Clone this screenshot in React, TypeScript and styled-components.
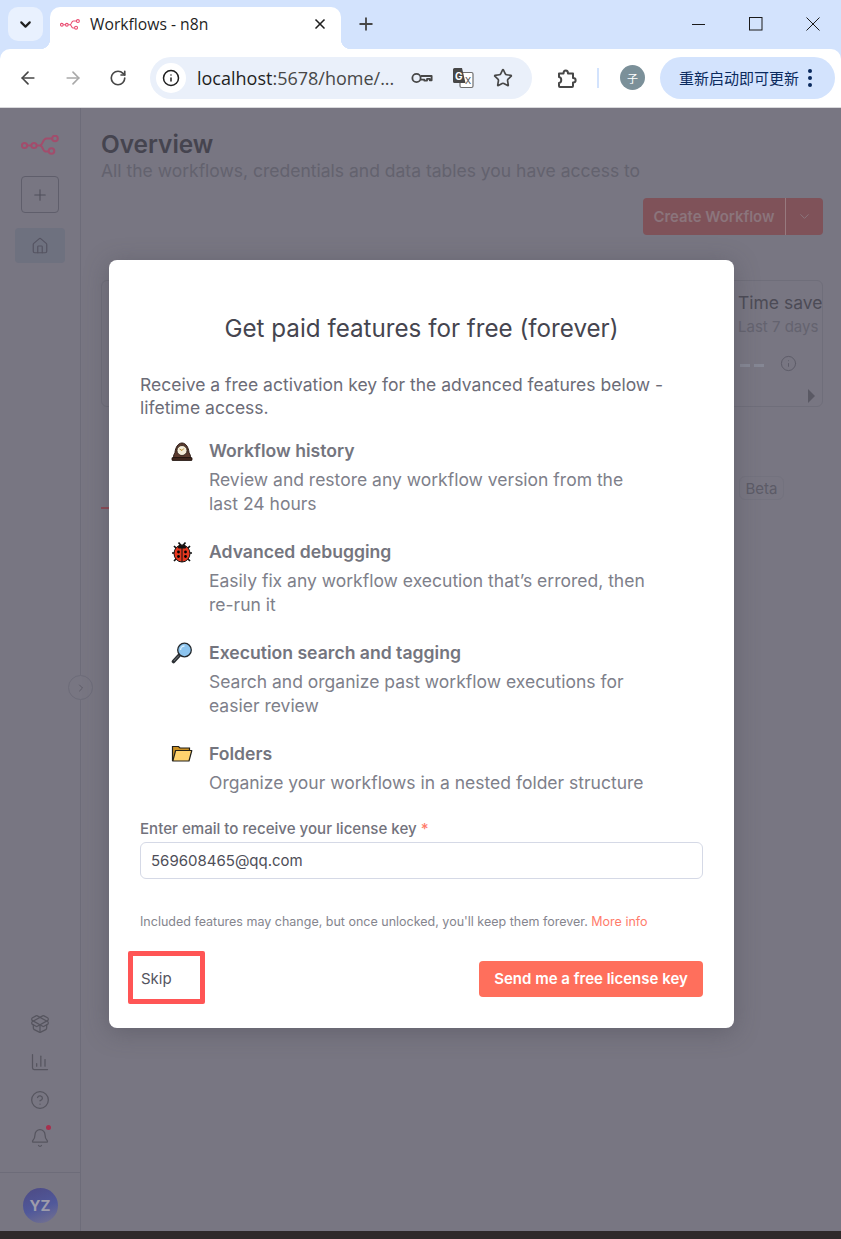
import React from "react";
import styled, { createGlobalStyle } from "styled-components";
import { ArrowLeft, ArrowRight, RotateCw, Info, Star, Plus, X, ChevronDown, ChevronRight, Home, PackageOpen, ChartColumn, CircleHelp, Bell } from "lucide-react";

const Global = createGlobalStyle`
  html, body { margin: 0; padding: 0; background: #787682; }
  * { box-sizing: border-box; }
  body { font-family: Inter, "Liberation Sans", sans-serif; }
`;

const Page = styled.div`
  width: 841px; height: 1239px; display: flex; flex-direction: column; overflow: hidden; background: #d3e3fd;
`;
const TabStrip = styled.div`
  height: 49px; flex: none; display: flex; align-items: flex-start; padding: 7px 0 0 8px; background: #d3e3fd;
`;
const TabMenu = styled.div`
  width: 35px; height: 34px; border-radius: 10px; background: #e9f1fe; color: #1f1f1f; display: flex; align-items: center; justify-content: center; flex: none;
`;
const Tab = styled.div`
  position: relative; width: 291px; height: 42px; margin-left: 7px; background: #fff; border-radius: 10px 10px 0 0; display: flex; align-items: center; padding: 0 13px 8px 10px; gap: 10px; color: #1f1f1f;
  font: 400 15.7px "Open Sans", "Liberation Sans", sans-serif; flex: none;
  &::before, &::after { content: ""; position: absolute; bottom: 0; width: 10px; height: 10px; }
  &::before { left: -10px; background: radial-gradient(circle at 0 0, transparent 10px, #fff 10.5px); }
  &::after { right: -10px; background: radial-gradient(circle at 100% 0, transparent 10px, #fff 10.5px); }
`;
const TabTitle = styled.span`flex: 1;`;
const NewTab = styled.div`
  margin: 7px 0 0 15px; color: #474747; display: flex; flex: none;
`;
const WindowControls = styled.div`
  margin-left: auto; display: flex; align-items: center; height: 34px; padding-right: 21px; gap: 43px; color: #1a1a1a;
`;
const Toolbar = styled.div`
  height: 59px; flex: none; display: flex; align-items: center; background: #fff; border-radius: 10px 10px 0 0; padding: 0 6px 1px 18px; border-bottom: 1px solid #d9d9dc; position: relative;
`;
const NavButton = styled.div<{ $dim?: boolean }>`
  width: 20px; display: flex; justify-content: center; color: ${(p) => (p.$dim ? "#a9a9a9" : "#474747")}; margin-right: 25px; flex: none;
`;
const Omnibox = styled.div`
  width: 382px; height: 42px; border-radius: 21px; background: #eaf0fa; margin-left: -3px; display: flex; align-items: center; padding: 0 18px 0 6px; flex: none;
`;
const InfoChip = styled.div`
  width: 30px; height: 30px; border-radius: 50%; background: #fff; display: flex; align-items: center; justify-content: center; color: #1f1f1f; flex: none;
`;
const Url = styled.span`
  margin-left: 11px; font: 400 18px "Open Sans", "Liberation Sans", sans-serif; color: #1f1f1f; width: 214px; white-space: nowrap; flex: none;
`;
const Muted = styled.span`color: #474747;`;
const OmniIcons = styled.div`display: flex; align-items: center; gap: 19px; color: #474747;`;
const ExtIcon = styled.div`margin-left: 24px; display: flex; color: #474747; flex: none;`;
const Separator = styled.div`width: 2px; height: 20px; background: #d3e3fd; margin-left: 19px; flex: none;`;
const Profile = styled.div`
  width: 25px; height: 25px; border-radius: 50%; background: #7b9099; color: #fff; font: 400 11px "Noto Sans CJK SC", sans-serif; display: flex; align-items: center; justify-content: center; margin-left: 21px; flex: none;
`;
const UpdatePill = styled.div`
  width: 175px; height: 42px; border-radius: 21px; background: #d3e3fd; color: #0a2a5e; margin-left: 15px; display: flex; align-items: center; padding-left: 19px;
  font: 400 15px "Noto Sans CJK SC", sans-serif; flex: none; white-space: nowrap;
`;
const Kebab = styled.div`
  margin-left: 9px; display: flex; flex-direction: column; gap: 3px;
  i { width: 4px; height: 4px; border-radius: 50%; background: #0a2a5e; display: block; }
`;

const AppArea = styled.div`
  position: relative; height: 1123px; flex: none; display: flex; background: #787682; overflow: hidden;
`;
const Sidebar = styled.aside`
  width: 81px; flex: none; border-right: 1px solid #6d6c79; display: flex; flex-direction: column; align-items: center; padding-top: 27px; position: relative; color: #5b5a66;
`;
const LogoBox = styled.div`height: 20px; display: flex;`;
const AddButton = styled.div`
  width: 38px; height: 37px; margin-top: 21px; border: 1px solid #5f5e6b; border-radius: 4px; display: flex; align-items: center; justify-content: center; color: #4f4e5a;
`;
const HomeButton = styled.div`
  width: 50px; height: 35px; margin-top: 15px; border-radius: 4px; background: #6e717f; display: flex; align-items: center; justify-content: center; color: #555462;
`;
const SideIcons = styled.div`
  margin-top: auto; display: flex; flex-direction: column; align-items: center; gap: 18px; color: #56555f; padding-bottom: 24px;
`;
const BellWrap = styled.div`
  position: relative; display: flex;
  &::after { content: ""; position: absolute; right: -1px; top: -3px; width: 5px; height: 5px; border-radius: 50%; background: #a8304d; }
`;
const SideFooter = styled.div`
  width: 80px; height: 59px; border-top: 1px solid #6d6c79; display: flex; justify-content: center; padding-top: 15px; flex: none;
`;
const Avatar = styled.div`
  width: 35px; height: 35px; border-radius: 50%; background: linear-gradient(160deg, #4d4a84 0%, #50589a 55%, #77748f 100%); color: #9d9cab; font: 700 15px Inter, sans-serif; display: flex; align-items: center; justify-content: center;
`;
const Collapse = styled.div`
  position: absolute; top: 567px; right: -13px; width: 25px; height: 25px; border-radius: 50%; border: 1px solid #6d6c79; background: #787682; display: flex; align-items: center; justify-content: center; color: #55545f;
`;
const BottomBar = styled.div`height: 8px; flex: none; background: #2f2a2b;`;

const Main = styled.main`
  flex: 1; min-width: 0; padding: 22px 18px 0 20px; display: flex; flex-direction: column;
`;
const Heading = styled.h1`margin: 0; font: 600 24.4px/28px Inter, sans-serif; color: #45444f;`;
const Sub = styled.p`margin: 1px 0 0; font: 400 17.5px/24px Inter, sans-serif; color: #63626e; white-space: nowrap;`;
const Actions = styled.div`display: flex; justify-content: flex-end; margin-top: 15px;`;
const CreateSplit = styled.div`
  width: 180px; height: 37px; background: #7f5259; border-radius: 4px; display: flex; color: #8b757c; font: 600 14.9px Inter, sans-serif;
`;
const CreateLabel = styled.div`flex: 1; display: flex; align-items: center; justify-content: center; border-right: 1px solid #977a7f;`;
const CreateCaret = styled.div`width: 37px; display: flex; align-items: center; justify-content: center;`;
const InsightCard = styled.div`
  position: relative; margin-top: 45px; height: 127px; border: 1px solid #6f6e7a; border-radius: 6px; display: flex; justify-content: flex-end; overflow: hidden;
`;
const Insight = styled.div`width: 84px; flex: none; padding-top: 11px; white-space: nowrap; overflow: hidden;`;
const InsightTitle = styled.div`font: 400 17.5px/22px Inter, sans-serif; color: #4c4b56;`;
const InsightRange = styled.div`font: 400 15px/20px Inter, sans-serif; color: #64636f; margin-top: 3px;`;
const InsightValue = styled.div`display: flex; align-items: center; gap: 16px; margin-top: 17px; color: #5d5c68; height: 18px;`;
const Dashes = styled.span`display: block; width: 24px; height: 3px; margin: 4px 0 0 2px; background: repeating-linear-gradient(90deg, #858794 0 10px, transparent 10px 14px);`;
const ScrollArrow = styled.div`
  position: absolute; right: 7px; bottom: 3px; width: 0; height: 0; border-left: 7px solid #5a5964; border-top: 7px solid transparent; border-bottom: 7px solid transparent;
`;
const TabRow = styled.div`
  margin-top: 69px; height: 35px; display: flex; align-items: flex-start; justify-content: space-between;
`;
const ActiveTab = styled.div`
  width: 70px; height: 33px; border-bottom: 2px solid #8d4a55;
`;
const Beta = styled.div`
  margin-right: 39px; width: 45px; height: 24px; border: 1px solid #73727e; border-radius: 6px; display: flex; align-items: center; justify-content: center; font: 400 15px Inter, sans-serif; color: #5c5b67;
`;

const Overlay = styled.div`position: absolute; inset: 0; padding: 152px 0 0 109px;`;
const Modal = styled.section`
  width: 625px; height: 768px; background: #fff; border-radius: 8px; padding: 0 31px; display: flex; flex-direction: column; box-shadow: 0 4px 24px rgba(60, 60, 70, .35);
`;
const ModalTitle = styled.h2`
  margin: 53px 0 0; font: 400 24.2px/32px Inter, sans-serif; color: #45454f; text-align: center;
`;
const Lead = styled.p`
  margin: 28px 0 0; font: 400 17.5px/23px Inter, sans-serif; color: #6c6c77;
`;
const FeatureList = styled.ul`margin: 20px 0 0; padding: 0 0 0 31px; list-style: none; display: flex; flex-direction: column; gap: 25px;`;
const Feature = styled.li`display: grid; grid-template-columns: 38px 1fr; `;
const FeatureIcon = styled.div`padding-top: 1px; display: flex;`;
const FeatureTitle = styled.div`font: 600 17.6px/23px Inter, sans-serif; color: #74757e;`;
const FeatureText = styled.div`margin-top: 6px; width: 440px; font: 400 17.5px/23.5px Inter, sans-serif; color: #7e808a;`;
const FieldLabel = styled.label`display: block; margin-top: 24px; font: 500 15.1px/20px Inter, sans-serif; color: #72727c;`;
const Required = styled.span`color: #ff7c6b;`;
const EmailInput = styled.input`
  display: block; width: 563px; height: 37px; margin-top: 3px; padding: 0 10px; border: 1px solid #d5d9e6; border-radius: 6px; font: 400 15px Inter, sans-serif; color: #4e4e58; outline: none; background: #fff;
`;
const Note = styled.p`margin: 34px 0 0; font: 400 12.5px/18px Inter, sans-serif; color: #85858e;`;
const MoreInfo = styled.a`color: #ff7c6b;`;
const ModalFooter = styled.div`display: flex; align-items: flex-start; justify-content: space-between; margin-top: 20px;`;
const SkipButton = styled.button`
  width: 77px; height: 53px; margin-left: -12px; padding: 2px 0 0 8px; text-align: left; border: 5px solid #ff5555; border-radius: 2px; background: #fff; font: 400 15px Inter, sans-serif; color: #55555f;
`;
const SendButton = styled.button`
  width: 224px; height: 36px; margin-top: 10px; border: 0; border-radius: 4px; background: #ff6f5c; color: #fff; font: 600 15px Inter, sans-serif;
`;

const N8nLogo = ({ w, h, c }: { w: number; h: number; c: string }) => (
  <svg width={w} height={h} viewBox="0 0 38 20" fill="none" stroke={c} strokeWidth="2">
    <circle cx="3.5" cy="10.5" r="2.6" />
    <circle cx="13" cy="10.5" r="2.6" />
    <path d="M6 10.5h4.500M15.600 10.500h3.400c3 0 2.400-7 6.500-7h6" />
    <path d="M19 10.500c3 0 2.400 6 5.500 6h3.500" />
    <circle cx="34" cy="3.5" r="2.8" />
    <circle cx="30.5" cy="16" r="2.8" />
  </svg>
);

const ClockEmoji = () => (
  <svg width="22" height="22" viewBox="0 0 22 22">
    <path d="M2.500 18c0-3 .5-3.500 1.500-5.500.5-5 3-9.500 7-9.500s6.500 4.500 7 9.500c1 2 1.500 2.500 1.500 5.500z" fill="#5b3a2e" stroke="#2a1a14" strokeWidth="1" />
    <rect x="1" y="17.500" width="20" height="3" rx=".6" fill="#3e261d" stroke="#20130e" strokeWidth=".8" />
    <circle cx="11" cy="10.500" r="5" fill="#f4ecd8" stroke="#2a1a14" strokeWidth=".8" />
    <path d="M11 10.500 8.500 9M11 10.500l1.800-2" stroke="#b98a2e" strokeWidth="1" />
  </svg>
);
const BugEmoji = () => (
  <svg width="22" height="22" viewBox="0 0 22 22">
    <path d="M3 5l3 3M19 5l-3 3M1 12h4M21 12h-4M3 20l3-3M19 20l-3-3M7.500 1.500l2.500 3M14.500 1.500l-2.500 3" stroke="#111" strokeWidth="1.700" />
    <ellipse cx="11" cy="12.500" rx="8" ry="8.500" fill="#e8381f" stroke="#111" strokeWidth="1" />
    <path d="M6.500 6c1.500-2.500 7.500-2.500 9 0l-1 1.500h-7z" fill="#111" />
    <path d="M11 6v15" stroke="#111" strokeWidth="1" />
    <circle cx="7.500" cy="11" r="1.400" /><circle cx="14.500" cy="11" r="1.400" /><circle cx="7.500" cy="15.500" r="1.400" /><circle cx="14.500" cy="15.500" r="1.400" />
  </svg>
);
const LensEmoji = () => (
  <svg width="22" height="22" viewBox="0 0 22 22">
    <path d="M2.500 19.500 8.500 13" stroke="#2b2f33" strokeWidth="3.600" strokeLinecap="round" />
    <path d="M2.800 19 8 13.500" stroke="#8a9298" strokeWidth=".8" />
    <circle cx="13.500" cy="8" r="6.800" fill="#8cc4ee" stroke="#23282c" strokeWidth="1.300" />
    <path d="M9.500 8a4 4 0 0 1 4-4" fill="none" stroke="#d9effc" strokeWidth="1.300" />
  </svg>
);
const FolderEmoji = () => (
  <svg width="22" height="22" viewBox="0 0 22 22">
    <path d="M1.500 18V3.500h6l1.500 1.500h9.500v3" fill="#c98f22" stroke="#22201a" strokeWidth="1.200" />
    <path d="M1.800 18 4.600 7.500h16.200L18 18z" fill="#ffd36e" stroke="#22201a" strokeWidth="1.200" strokeLinejoin="round" />
  </svg>
);
const KeyIcon = () => (
  <svg width="22" height="14" viewBox="0 0 24 14" fill="none" stroke="currentColor" strokeWidth="2">
    <circle cx="6" cy="7" r="4.500" />
    <path d="M10.500 4.800H22.500V9.500H20.500V8H17.500V9.800H14.500V8.800H10.500" strokeLinejoin="round" />
  </svg>
);
const TranslateIcon = () => (
  <svg width="22" height="22" viewBox="0 0 22 22">
    <rect x="8" y="5.500" width="13" height="15" rx="1.500" fill="#fff" stroke="#6f6f6f" strokeWidth="1.200" />
    <path d="M1 2.500A1.500 1.500 0 0 1 2.500 1H10l3.500 15H2.500A1.500 1.500 0 0 1 1 14.500z" fill="#474747" />
    <text x="3" y="12.500" fontFamily="Inter, sans-serif" fontWeight="700" fontSize="10" fill="#fff">G</text>
    <text x="13" y="17" fontFamily="Inter, sans-serif" fontSize="9" fill="#474747">X</text>
  </svg>
);
const PuzzleIcon = () => (
  <svg width="22" height="22" viewBox="0 0 22 22" fill="none" stroke="currentColor" strokeWidth="2" strokeLinejoin="round">
    <path d="M3 6.500h4.500c0-4 4.500-4 4.500 0H17v4.500c3.500 0 3.500 4.500 0 4.500v3.500a1 1 0 0 1-1 1H4a1 1 0 0 1-1-1v-3c3-.5 3-5.500 0-6z" />
  </svg>
);

const features = [
  { icon: <ClockEmoji />, title: "Workflow history", text: "Review and restore any workflow version from the last 24 hours" },
  { icon: <BugEmoji />, title: "Advanced debugging", text: "Easily fix any workflow execution that’s errored, then re-run it" },
  { icon: <LensEmoji />, title: "Execution search and tagging", text: "Search and organize past workflow executions for easier review" },
  { icon: <FolderEmoji />, title: "Folders", text: "Organize your workflows in a nested folder structure" },
];

export default function App() {
  return (
    <Page>
      <Global />
      <TabStrip>
        <TabMenu><ChevronDown size={17} strokeWidth={3} /></TabMenu>
        <Tab>
          <N8nLogo w={20} h={11} c="#ea4b71" />
          <TabTitle>Workflows - n8n</TabTitle>
          <X size={16} strokeWidth={2.5} />
        </Tab>
        <NewTab><Plus size={20} strokeWidth={2.2} /></NewTab>
        <WindowControls>
          <svg width="14" height="14" viewBox="0 0 14 14"><path d="M0 7.500h13" stroke="currentColor" /></svg>
          <svg width="14" height="14" viewBox="0 0 14 14" fill="none"><rect x=".5" y=".5" width="12.500" height="12.500" stroke="currentColor" /></svg>
          <svg width="14" height="14" viewBox="0 0 14 14"><path d="M.5.500l13 13M13.500.500l-13 13" stroke="currentColor" /></svg>
        </WindowControls>
      </TabStrip>
      <Toolbar>
        <NavButton><ArrowLeft size={20} strokeWidth={2} /></NavButton>
        <NavButton $dim><ArrowRight size={20} strokeWidth={2} /></NavButton>
        <NavButton><RotateCw size={18} strokeWidth={2.2} /></NavButton>
        <Omnibox>
          <InfoChip><Info size={18} strokeWidth={2} /></InfoChip>
          <Url>localhost<Muted>:5678/home/...</Muted></Url>
          <OmniIcons>
            <KeyIcon />
            <TranslateIcon />
            <Star size={20} strokeWidth={2} />
          </OmniIcons>
        </Omnibox>
        <ExtIcon><PuzzleIcon /></ExtIcon>
        <Separator />
        <Profile>子</Profile>
        <UpdatePill>
          重新启动即可更新
          <Kebab><i /><i /><i /></Kebab>
        </UpdatePill>
      </Toolbar>
      <AppArea>
        <Sidebar>
          <LogoBox><N8nLogo w={38} h={20} c="#a24d6c" /></LogoBox>
          <AddButton><Plus size={18} strokeWidth={1.4} /></AddButton>
          <HomeButton><Home size={18} strokeWidth={1.6} /></HomeButton>
          <SideIcons>
            <PackageOpen size={20} strokeWidth={1.5} />
            <ChartColumn size={20} strokeWidth={1.5} />
            <CircleHelp size={20} strokeWidth={1.5} />
            <BellWrap><Bell size={20} strokeWidth={1.5} /></BellWrap>
          </SideIcons>
          <SideFooter><Avatar>YZ</Avatar></SideFooter>
          <Collapse><ChevronRight size={12} strokeWidth={1.6} /></Collapse>
        </Sidebar>
        <Main>
          <Heading>Overview</Heading>
          <Sub>All the workflows, credentials and data tables you have access to</Sub>
          <Actions>
            <CreateSplit>
              <CreateLabel>Create Workflow</CreateLabel>
              <CreateCaret><ChevronDown size={15} strokeWidth={1.6} /></CreateCaret>
            </CreateSplit>
          </Actions>
          <InsightCard>
            <Insight>
              <InsightTitle>Time saved</InsightTitle>
              <InsightRange>Last 7 days</InsightRange>
              <InsightValue><Dashes /><Info size={17} strokeWidth={1.4} /></InsightValue>
            </Insight>
            <ScrollArrow />
          </InsightCard>
          <TabRow>
            <ActiveTab />
            <Beta>Beta</Beta>
          </TabRow>
        </Main>
        <Overlay>
          <Modal>
            <ModalTitle>Get paid features for free (forever)</ModalTitle>
            <Lead>Receive a free activation key for the advanced features below - lifetime access.</Lead>
            <FeatureList>
              {features.map((f) => (
                <Feature key={f.title}>
                  <FeatureIcon>{f.icon}</FeatureIcon>
                  <div>
                    <FeatureTitle>{f.title}</FeatureTitle>
                    <FeatureText>{f.text}</FeatureText>
                  </div>
                </Feature>
              ))}
            </FeatureList>
            <FieldLabel>Enter email to receive your license key <Required>*</Required></FieldLabel>
            <EmailInput defaultValue="569608465@qq.com" />
            <Note>Included features may change, but once unlocked, you'll keep them forever. <MoreInfo>More info</MoreInfo></Note>
            <ModalFooter>
              <SkipButton>Skip</SkipButton>
              <SendButton>Send me a free license key</SendButton>
            </ModalFooter>
          </Modal>
        </Overlay>
      </AppArea>
      <BottomBar />
    </Page>
  );
}
